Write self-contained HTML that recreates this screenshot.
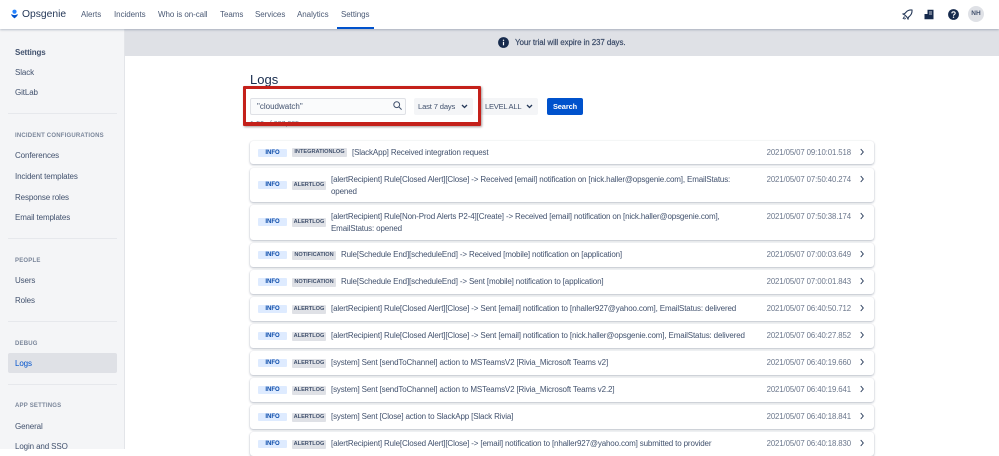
<!DOCTYPE html>
<html><head><meta charset="utf-8"><title>Opsgenie Logs</title>
<style>
html,body{margin:0;padding:0;background:#fff}
body{width:999px;height:449px;overflow:hidden;position:relative;font-family:"Liberation Sans",sans-serif;color:#42526e;font-size:8px}
div,span,a{position:absolute;white-space:nowrap}
.t{line-height:12px;height:12px;transform:translateY(-6px)}
.nav{font-size:8px;color:#4b5a75;top:14px;letter-spacing:-.05px;transform:translateY(-5px)}
.side{font-size:8px;left:15px;color:#42526e;letter-spacing:-.12px;transform:translateY(-5px)}
.h{font-size:6px;left:15px;color:#7a869a;font-weight:bold;letter-spacing:.2px;transform:translateY(-5px)}
.dv{left:8px;width:109px;height:1px;background:#e6e8ec}
.row{left:250px;width:624px;background:#fff;border-radius:3px;box-shadow:0 1px 2px rgba(9,30,66,.28),0 0 1px rgba(9,30,66,.12)}
.info{left:8px;width:29px;height:8px;line-height:8px;background:#deebff;color:#0a4aa8;font-size:6px;font-weight:bold;text-align:center;border-radius:1px}
.tag{left:42px;height:9px;line-height:9px;background:#dfe1e6;color:#42526e;font-size:5.6px;font-weight:bold;text-align:center;border-radius:1px}
.msg{font-size:8px;color:#42526e;line-height:11.5px;letter-spacing:-.15px}
.ts{right:23px;font-size:7.8px;color:#6b778c;letter-spacing:-.1px}
.chev{position:absolute;left:609px;width:6px;height:8px;stroke-width:1.1px;margin-top:-.5px}
</style></head><body>

<div style="left:0;top:0;width:999px;height:29px;background:#fff;box-shadow:0 1px 2px rgba(9,30,66,.25);z-index:3"></div>
<div style="left:0;top:29px;width:124px;height:420px;background:#f4f5f7;border-right:1px solid #e3e5e9"></div>
<div style="left:125px;top:29px;width:874px;height:27px;background:#dfe1e6"></div>

<div style="z-index:4;left:0;top:0;width:999px;height:29px">
<svg style="position:absolute;left:11px;top:9px" width="7" height="10" viewBox="0 0 9 12"><circle cx="4.5" cy="3" r="2.7" fill="#2684ff"/><path d="M4.5 11.6C3 10.6 1.2 9 .3 7.2c-.3-.6.3-1.100.8-.8C2 7 3.300 7.400 4.500 7.400S7 7 7.900 6.400c.5-.3 1.100.2.8.8C7.800 9 6 10.600 4.500 11.600z" fill="#0052cc"/></svg>
<span class="t" style="left:22px;top:14.500px;font-size:10.300px;color:#253858">Opsgenie</span>
<span class="t nav" style="left:81px">Alerts</span>
<span class="t nav" style="left:114px">Incidents</span>
<span class="t nav" style="left:158px">Who is on-call</span>
<span class="t nav" style="left:220px">Teams</span>
<span class="t nav" style="left:255px">Services</span>
<span class="t nav" style="left:297px">Analytics</span>
<span class="t nav" style="left:341px">Settings</span>
<div style="left:337px;top:27px;width:37px;height:2px;background:#0052cc"></div>

<svg style="position:absolute;left:902px;top:9px" width="11" height="11" viewBox="0 0 11 11" fill="none" stroke="#253858" stroke-width="1.100"><path d="M10 1C7.500.8 5.500 1.500 4 3.200L2.800 4.500 1 5l2 1.200L4.800 8 6 10l.5-1.800L7.800 7C9.500 5.500 10.200 3.500 10 1z"/><path d="M2.500 7.500 1 10M3.500 9 2.500 10.300"/></svg>
<svg style="position:absolute;left:924px;top:9px" width="10" height="11" viewBox="0 0 10 11"><path d="M3.500.8h6v9.400h-9V5h3z" fill="#172b4d"/><path d="M5 3h3M5 5h3" stroke="#fff" stroke-width=".8"/></svg>
<svg style="position:absolute;left:948px;top:9px" width="11" height="11" viewBox="0 0 11 11"><circle cx="5.500" cy="5.500" r="5.400" fill="#172b4d"/><path d="M3.800 4.300c.1-1 .8-1.500 1.700-1.500 1 0 1.700.6 1.700 1.400 0 1.300-1.700 1.200-1.700 2.500" fill="none" stroke="#fff" stroke-width="1.100"/><circle cx="5.500" cy="8.200" r=".7" fill="#fff"/></svg>
<div style="left:968px;top:6px;width:16px;height:16px;border-radius:50%;background:#dfe1e6;color:#42526e;font-size:6.500px;font-weight:bold;line-height:16px;text-align:center">NH</div>
</div>

<svg style="position:absolute;left:498px;top:37px" width="11" height="11" viewBox="0 0 11 11"><circle cx="5.500" cy="5.500" r="5.400" fill="#172b4d"/><rect x="4.900" y="4.800" width="1.200" height="3.500" fill="#fff"/><circle cx="5.500" cy="3.300" r=".7" fill="#fff"/></svg>
<span class="t" style="left:515px;top:42.500px;font-size:8px;color:#344563;-webkit-text-stroke:.15px #344563;letter-spacing:-.1px">Your trial will expire in 237 days.</span>

<span class="t side" style="top:52px;font-weight:bold">Settings</span>
<span class="t side" style="top:72px">Slack</span>
<span class="t side" style="top:92px">GitLab</span>
<div class="dv" style="top:113px"></div>
<span class="t h" style="top:134.500px">INCIDENT CONFIGURATIONS</span>
<span class="t side" style="top:155px">Conferences</span>
<span class="t side" style="top:176px">Incident templates</span>
<span class="t side" style="top:197px">Response roles</span>
<span class="t side" style="top:217px">Email templates</span>
<div class="dv" style="top:238px"></div>
<span class="t h" style="top:259.500px">PEOPLE</span>
<span class="t side" style="top:280px">Users</span>
<span class="t side" style="top:300px">Roles</span>
<div class="dv" style="top:321px"></div>
<span class="t h" style="top:343px">DEBUG</span>
<div style="left:8px;top:353px;width:109px;height:20px;background:#dfe1e6;border-radius:2px"></div>
<span class="t side" style="top:363px;color:#0052cc">Logs</span>
<div class="dv" style="top:384px"></div>
<span class="t h" style="top:405px">APP SETTINGS</span>
<span class="t side" style="top:425.500px">General</span>
<span class="t side" style="top:446px">Login and SSO</span>

<span class="t" style="left:250px;top:80px;font-size:13px;color:#172b4d">Logs</span>

<span class="t" style="left:250px;top:125px;font-size:7px;color:#6b778c">1-50 of 237,285</span>
<div style="left:250px;top:98px;width:154px;height:15px;background:#fafbfc;border:1px solid #dfe1e6;border-radius:2px"></div>
<span class="t" style="left:257px;top:106.500px;font-size:8px;color:#42526e">"cloudwatch"</span>
<svg style="position:absolute;left:393px;top:101px" width="9" height="9" viewBox="0 0 9 9" fill="none" stroke="#42526e" stroke-width="1"><circle cx="3.700" cy="3.700" r="2.900"/><path d="M5.800 5.800 8.600 8.600"/></svg>

<div style="left:414px;top:98px;width:59px;height:17px;background:#f4f5f7;border-radius:2px"></div>
<span class="t" style="left:418px;top:106.500px;font-size:7.600px;letter-spacing:-.15px;color:#42526e">Last 7 days</span>
<svg style="position:absolute;left:461px;top:104px" width="7" height="5" viewBox="0 0 7 5" fill="none" stroke="#253858" stroke-width="1.300"><path d="M1 1l2.500 2.500L6 1"/></svg>
<div style="left:481px;top:98px;width:57px;height:17px;background:#f4f5f7;border-radius:2px"></div>
<span class="t" style="left:485px;top:106.500px;font-size:7.600px;letter-spacing:-.25px;color:#42526e">LEVEL ALL</span>
<svg style="position:absolute;left:526px;top:104px" width="7" height="5" viewBox="0 0 7 5" fill="none" stroke="#253858" stroke-width="1.300"><path d="M1 1l2.500 2.500L6 1"/></svg>
<div style="left:547px;top:98px;width:36px;height:17px;line-height:17px;background:#0052cc;border-radius:2px;color:#fff;font-size:7.400px;letter-spacing:-.1px;font-weight:bold;text-align:center">Search</div>

<div style="left:243px;top:86px;width:232px;height:33px;border:3px solid #c4201a;border-bottom-width:4px;border-radius:1px;box-shadow:1px 1px 2px rgba(60,30,30,.45);z-index:2"></div>

<div class="row" style="top:141px;height:23px"><span class="info" style="top:8px">INFO</span><span class="tag" style="top:7px;width:55px">INTEGRATIONLOG</span><span class="t msg" style="left:102px;top:12px">[SlackApp] Received integration request</span><span class="t ts" style="top:12px">2021/05/07 09:10:01.518</span><svg class="chev" style="top:7px" viewBox="0 0 7 9" fill="none" stroke="#253858" stroke-width="1.300"><path d="M2 1l3 3.500L2 8"/></svg></div>

<div class="row" style="top:168px;height:34px"><span class="info" style="top:13px">INFO</span><span class="tag" style="top:12.500px;width:34px">ALERTLOG</span><span class="msg" style="left:81px;top:6px">[alertRecipient] Rule[Closed Alert][Close] -&gt; Received [email] notification on [nick.haller@opsgenie.com], EmailStatus:<br>opened</span><span class="t ts" style="top:12px">2021/05/07 07:50:40.274</span><svg class="chev" style="top:7.500px" viewBox="0 0 7 9" fill="none" stroke="#253858" stroke-width="1.300"><path d="M2 1l3 3.500L2 8"/></svg></div>

<div class="row" style="top:205px;height:35px"><span class="info" style="top:13px">INFO</span><span class="tag" style="top:12.500px;width:34px">ALERTLOG</span><span class="msg" style="left:81px;top:6px">[alertRecipient] Rule[Non-Prod Alerts P2-4][Create] -&gt; Received [email] notification on [nick.haller@opsgenie.com],<br>EmailStatus: opened</span><span class="t ts" style="top:12px">2021/05/07 07:50:38.174</span><svg class="chev" style="top:7.500px" viewBox="0 0 7 9" fill="none" stroke="#253858" stroke-width="1.300"><path d="M2 1l3 3.500L2 8"/></svg></div>

<div class="row" style="top:243px;height:24px"><span class="info" style="top:8px">INFO</span><span class="tag" style="top:7.500px;width:44px">NOTIFICATION</span><span class="t msg" style="left:91px;top:12px">Rule[Schedule End][scheduleEnd] -&gt; Received [mobile] notification on [application]</span><span class="t ts" style="top:12px">2021/05/07 07:00:03.649</span><svg class="chev" style="top:7.500px" viewBox="0 0 7 9" fill="none" stroke="#253858" stroke-width="1.300"><path d="M2 1l3 3.500L2 8"/></svg></div>

<div class="row" style="top:270px;height:24px"><span class="info" style="top:8px">INFO</span><span class="tag" style="top:7.500px;width:44px">NOTIFICATION</span><span class="t msg" style="left:91px;top:12px">Rule[Schedule End][scheduleEnd] -&gt; Sent [mobile] notification to [application]</span><span class="t ts" style="top:12px">2021/05/07 07:00:01.843</span><svg class="chev" style="top:7.500px" viewBox="0 0 7 9" fill="none" stroke="#253858" stroke-width="1.300"><path d="M2 1l3 3.500L2 8"/></svg></div>

<div class="row" style="top:297px;height:24px"><span class="info" style="top:8px">INFO</span><span class="tag" style="top:7.500px;width:34px">ALERTLOG</span><span class="t msg" style="left:81px;top:12px">[alertRecipient] Rule[Closed Alert][Close] -&gt; Sent [email] notification to [nhaller927@yahoo.com], EmailStatus: delivered</span><span class="t ts" style="top:12px">2021/05/07 06:40:50.712</span><svg class="chev" style="top:7.500px" viewBox="0 0 7 9" fill="none" stroke="#253858" stroke-width="1.300"><path d="M2 1l3 3.500L2 8"/></svg></div>

<div class="row" style="top:324px;height:24px"><span class="info" style="top:8px">INFO</span><span class="tag" style="top:7.500px;width:34px">ALERTLOG</span><span class="t msg" style="left:81px;top:12px">[alertRecipient] Rule[Closed Alert][Close] -&gt; Sent [email] notification to [nick.haller@opsgenie.com], EmailStatus: delivered</span><span class="t ts" style="top:12px">2021/05/07 06:40:27.852</span><svg class="chev" style="top:7.500px" viewBox="0 0 7 9" fill="none" stroke="#253858" stroke-width="1.300"><path d="M2 1l3 3.500L2 8"/></svg></div>

<div class="row" style="top:351px;height:24px"><span class="info" style="top:8px">INFO</span><span class="tag" style="top:7.500px;width:34px">ALERTLOG</span><span class="t msg" style="left:81px;top:12px">[system] Sent [sendToChannel] action to MSTeamsV2 [Rivia_Microsoft Teams v2]</span><span class="t ts" style="top:12px">2021/05/07 06:40:19.660</span><svg class="chev" style="top:7.500px" viewBox="0 0 7 9" fill="none" stroke="#253858" stroke-width="1.300"><path d="M2 1l3 3.500L2 8"/></svg></div>

<div class="row" style="top:378px;height:24px"><span class="info" style="top:8px">INFO</span><span class="tag" style="top:7.500px;width:34px">ALERTLOG</span><span class="t msg" style="left:81px;top:12px">[system] Sent [sendToChannel] action to MSTeamsV2 [Rivia_Microsoft Teams v2.2]</span><span class="t ts" style="top:12px">2021/05/07 06:40:19.641</span><svg class="chev" style="top:7.500px" viewBox="0 0 7 9" fill="none" stroke="#253858" stroke-width="1.300"><path d="M2 1l3 3.500L2 8"/></svg></div>

<div class="row" style="top:405px;height:24px"><span class="info" style="top:8px">INFO</span><span class="tag" style="top:7.500px;width:34px">ALERTLOG</span><span class="t msg" style="left:81px;top:12px">[system] Sent [Close] action to SlackApp [Slack Rivia]</span><span class="t ts" style="top:12px">2021/05/07 06:40:18.841</span><svg class="chev" style="top:7.500px" viewBox="0 0 7 9" fill="none" stroke="#253858" stroke-width="1.300"><path d="M2 1l3 3.500L2 8"/></svg></div>

<div class="row" style="top:432px;height:24px"><span class="info" style="top:8px">INFO</span><span class="tag" style="top:7.500px;width:34px">ALERTLOG</span><span class="t msg" style="left:81px;top:12px">[alertRecipient] Rule[Closed Alert][Close] -&gt; [email] notification to [nhaller927@yahoo.com] submitted to provider</span><span class="t ts" style="top:12px">2021/05/07 06:40:18.830</span><svg class="chev" style="top:7.500px" viewBox="0 0 7 9" fill="none" stroke="#253858" stroke-width="1.300"><path d="M2 1l3 3.500L2 8"/></svg></div>

</body></html>
